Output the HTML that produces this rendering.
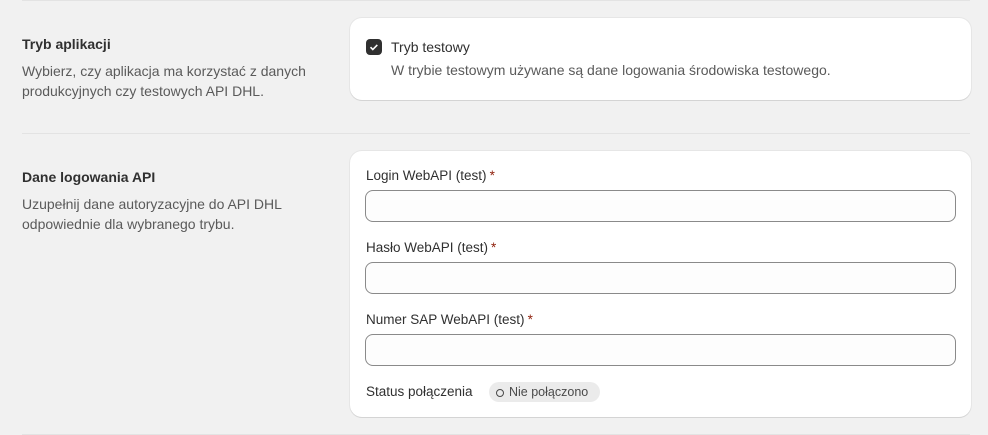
<!DOCTYPE html><html><head><meta charset="utf-8"><style>
body{margin:0;width:988px;height:435px;background:#f1f1f1;font-family:"Liberation Sans",sans-serif;position:relative;overflow:hidden;color:#303030}
.a{position:absolute}
.hr{position:absolute;left:22px;right:18px;height:1px;background:#e3e3e3}
.card{position:absolute;left:350px;width:621px;background:#fff;border-radius:12px;box-shadow:0 1px 0 #d4d4d4,0 0 0 1px #e6e6e6}
h3{position:absolute;left:22px;margin:0;font-size:14px;font-weight:bold;color:#303030}
.d{position:absolute;left:22px;font-size:14px;line-height:20px;color:#5a5a5a;width:310px}
.l{position:absolute;left:366px;font-size:13.5px;color:#303030}
.l b{color:#8e1f0b;font-weight:normal;margin-left:3px}
.in{position:absolute;left:365px;width:589px;height:30px;border:1px solid #8a8a8a;border-radius:8px;background:#fdfdfd}
</style></head><body>
<div class="hr" style="top:0"></div>
<div class="hr" style="top:133px"></div>
<div class="hr" style="top:434px"></div>
<h3 style="top:36px">Tryb aplikacji</h3>
<div class="d" style="top:61px">Wybierz, czy aplikacja ma korzystać z danych produkcyjnych czy testowych API DHL.</div>
<div class="card" style="top:18px;height:82px"></div>
<div class="a" style="left:366px;top:39px;width:16px;height:16px;background:#303030;border-radius:4px"><svg width="16" height="16"><path d="M4.5 8.2l2.3 2.3 4.5-4.6" stroke="#fff" stroke-width="1.6" fill="none"/></svg></div>
<div class="a" style="left:391px;top:39px;font-size:14px">Tryb testowy</div>
<div class="a" style="left:391px;top:62px;font-size:14px;color:#5a5a5a">W trybie testowym używane są dane logowania środowiska testowego.</div>
<h3 style="top:169px">Dane logowania API</h3>
<div class="d" style="top:194px">Uzupełnij dane autoryzacyjne do API DHL odpowiednie dla wybranego trybu.</div>
<div class="card" style="top:151px;height:266px"></div>
<div class="l" style="top:168px">Login WebAPI (test)<b>*</b></div>
<div class="in" style="top:190px"></div>
<div class="l" style="top:240px">Hasło WebAPI (test)<b>*</b></div>
<div class="in" style="top:262px"></div>
<div class="l" style="top:312px">Numer SAP WebAPI (test)<b>*</b></div>
<div class="in" style="top:334px"></div>
<div class="l" style="top:384px">Status połączenia</div>
<div class="a" style="left:489px;top:382px;height:20px;width:111px;border-radius:10px;background:#ebebeb;font-size:12.5px;line-height:20px;color:#4a4a4a"><span style="display:inline-block;width:6px;height:6px;border:1.3px solid #4a4a4a;border-radius:50%;margin:0 5px 0 7px;vertical-align:-1px"></span>Nie połączono</div>
</body></html>
